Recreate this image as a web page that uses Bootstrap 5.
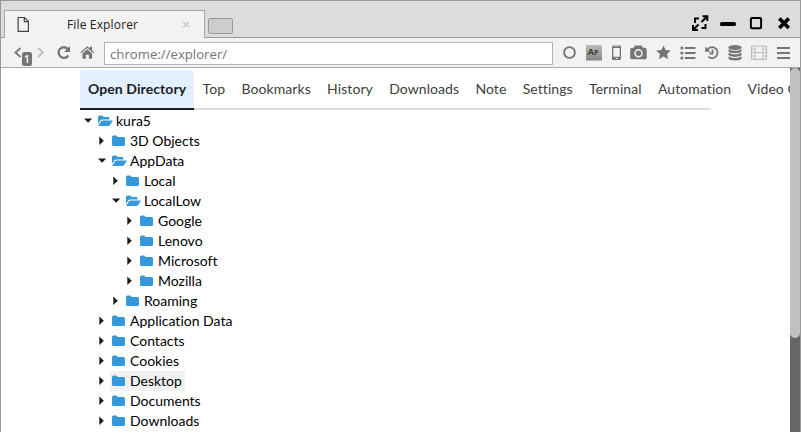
<!DOCTYPE html>
<html lang="en">
<head>
<meta charset="utf-8">
<title>File Explorer</title>
<link rel="stylesheet" href="https://cdn.jsdelivr.net/npm/bootstrap@5.3.0/dist/css/bootstrap.min.css">
<style>
body{font-family:Lato,"Liberation Sans",sans-serif;font-size:14px;line-height:20px;color:#000;font-variant-ligatures:none}
svg{display:block;flex:none}
.window{height:432px;border:1px solid #999;border-bottom:0;background:#fff}
.titlebar{height:37px;background:#dcdcdc;border-bottom:1px solid #999;padding-left:3px}
.browser-tab{width:201px;height:28px;flex:none;margin-top:9px;background:#f2f2f2;border:1px solid #a9a9a9;border-bottom:0;font-family:"Open Sans",sans-serif;font-size:12px;color:#222}
.tab-label{width:74px;margin-left:38px;white-space:nowrap;line-height:27px;letter-spacing:.15px}
.new-tab{width:25px;height:16px;margin:17px 0 0 3px;background:#cdcdcd;border:1px solid #999;border-radius:2px}
.toolbar{height:30px;background:#f2f2f2;border-bottom:1px solid #aaa}
.address{width:449px;height:23px;padding:0 5px;border:1px solid #b5b5b5;border-radius:0;font-family:"Open Sans",sans-serif;font-size:13.2px;line-height:21px;color:#757575;background:#fff;box-shadow:none}
.tools{color:#757575;margin-left:5px}
.page{height:364px;padding:2px 0 0 79px}
.menu-bar{width:631px;height:40px;border-bottom:2px solid #ddd}
.menu-bar .nav-link{height:40px;padding:9px 8px;color:#404040;white-space:nowrap;font-size:14px;line-height:20px;letter-spacing:.08px;margin-right:.25px}
.menu-bar .nav-link.active{width:114px;flex:none;background:#e2f0ff;border-bottom:2px solid #1b1c1d;border-radius:4px 4px 0 0;color:#1b1c1d;font-weight:700;margin-right:.6px}
.tree{padding:1px 0 0 3px}
.tree ul{padding-left:14px}
.tree-row{height:20px}
.entry{height:20px;padding:0 3px 0 2px}
.entry.hovered{background:#f1f1f1}
.scroll-track{width:10px;background:#666}
.scroll-thumb{height:270px;background:#c1c1c1;border-radius:5px}
</style>
<script src="https://cdn.jsdelivr.net/npm/bootstrap@5.3.0/dist/js/bootstrap.bundle.min.js"></script>
</head>
<body class="overflow-hidden">
<svg width="0" height="0" class="position-absolute">
  <symbol id="closed" viewBox="0 0 14 14"><path d="M0 3Q0 1.5 1.5 1.5H4Q5.4 1.5 5.4 3H11.5Q13 3 13 4.5V10.5Q13 12 11.5 12H1.5Q0 12 0 10.5Z" fill="#3498db"/></symbol>
  <symbol id="open" viewBox="0 0 15 14"><path d="M0 9.8V3Q0 1.5 1.5 1.5H4Q5.4 1.5 5.4 3H10Q11.6 3 11.6 4.6V5.5H4.4Q3.1 5.5 2.3 6.6Z" fill="#3498db"/><path d="M.3 11.5 3.2 7.2Q3.8 6.4 4.8 6.4H14.2Q15 6.5 14.5 7.3L12 11Q11.3 12 10.3 12H.8Q0 12 .3 11.5Z" fill="#3498db"/></symbol>
  <symbol id="down" viewBox="0 0 13 20"><path d="M1 7.5H9.2L5.1 11.8Z" fill="#1b1c1d"/></symbol>
  <symbol id="right" viewBox="0 0 13 20"><path d="M2.3 5.5V14L6.8 9.7Z" fill="#1b1c1d"/></symbol>
</svg>
<div class="window d-flex flex-column">
  <header class="titlebar d-flex">
    <div class="browser-tab d-flex">
      <svg width="24" height="27" viewBox="0 0 24 27" fill="none" stroke="#444" stroke-width="1.2"><path d="M13.1 6.5H19.5L23.4 10.4V20.4H13.1ZM19.3 6.7V10.7H23.2"/></svg>
      <span class="tab-label">File Explorer</span>
      <svg class="ms-auto me-1" width="27" height="27" viewBox="0 0 27 27" fill="none" stroke="#c5c5c5" stroke-width="1.2"><path d="M10 10.5 16 16.5M16 10.5 10 16.5"/></svg>
    </div>
    <div class="new-tab"></div>
    <div class="d-flex ms-auto">
      <svg width="28" height="36" viewBox="686 1 28 36" fill="none" stroke="#000" stroke-width="2"><path d="M699 18.5H695V23M701.5 28H705.5V24M701.5 22 706.5 17M698.5 24.5 693.5 29.5"/><path d="M702.5 16.2H707.3V21M693 25V30H698"/></svg>
      <svg width="28" height="36" viewBox="714 1 28 36"><rect x="720" y="22" width="16" height="4" rx="1.6"/></svg>
      <svg width="28" height="36" viewBox="742 1 28 36"><rect x="750.9" y="18" width="10.2" height="10.2" rx="1" fill="none" stroke="#000" stroke-width="2"/></svg>
      <svg width="30" height="36" viewBox="770 1 30 36"><path d="M779.3 18.5 788.8 28M788.8 18.5 779.3 28" stroke="#000" stroke-width="3.8"/></svg>
    </div>
  </header>
  <div class="toolbar d-flex align-items-start">
    <svg width="36" height="29" viewBox="1 38 36 29"><path d="M20.5 48 15.5 52.5 20.5 57" fill="none" stroke="#777" stroke-width="1.8"/><rect x="22" y="52" width="10" height="14" rx="2.5" fill="#757575"/><text x="24" y="63.2" font-family="Open Sans" font-size="10" font-weight="600" fill="#fff">1</text></svg>
    <svg width="15" height="29" viewBox="37 38 15 29"><path d="M38 48 43 52.5 38 57" fill="none" stroke="#bdbdbd" stroke-width="1.8"/></svg>
    <svg width="24" height="29" viewBox="52 38 24 29"><path d="M68 49.2A5.3 5.3 0 1 0 68.3 55.5" fill="none" stroke="#757575" stroke-width="2.3"/><path d="M70 46V52H64Z" fill="#757575"/></svg>
    <svg width="28" height="29" viewBox="76 38 28 29" fill="#757575"><path d="M80.5 52.3 87.3 46.3 90 48.6V46.8H92.1V50.4L94.2 52.3 93.5 53.2 87.3 47.9 81.2 53.2ZM82.5 53.5 87.3 49.3 92.1 53.5V58.7H88.9V54.8H85.8V58.7H82.5Z"/></svg>
    <input class="form-control address mt-1 flex-shrink-0" aria-label="Address" value="chrome://explorer/">
    <div class="tools d-flex">
      <svg width="24" height="29" viewBox="558 38 24 29"><circle cx="569.5" cy="52.5" r="5.4" fill="none" stroke="currentColor" stroke-width="1.9"/></svg>
      <svg width="24" height="29" viewBox="582 38 24 29"><defs><linearGradient id="ap" x2="0" y2="1"><stop stop-color="#bdbdb8"/><stop offset="1" stop-color="#858680"/></linearGradient></defs><rect x="586" y="45" width="16" height="15.5" rx=".6" fill="url(#ap)"/><text x="587.7" y="55.4" font-family="Open Sans" font-size="9" font-weight="700" fill="#383838">A<tspan font-size="7">P</tspan></text></svg>
      <svg width="22" height="29" viewBox="606 38 22 29"><path fill-rule="evenodd" fill="currentColor" d="M613.4 45.5H619.6Q621 45.5 621 47V58.4Q621 60 619.6 60H613.4Q612 60 612 58.4V47Q612 45.5 613.4 45.5ZM613.3 48V56.7H619.7V48ZM614.8 46.4V47H618.2V46.4ZM615.6 57.7V59H617.3V57.7Z"/></svg>
      <svg width="24" height="29" viewBox="628 38 24 29"><path fill="currentColor" d="M632 47.7H633.8L634.8 45.5H641.8L642.8 47.7H644.8Q646.7 47.7 646.7 49.7V57.4Q646.7 59.3 644.8 59.3H632Q630.2 59.3 630.2 57.4V49.7Q630.2 47.7 632 47.7Z"/><circle cx="638.5" cy="53.2" r="3.5" fill="none" stroke="#f2f2f2" stroke-width="1.5"/></svg>
      <svg width="24" height="29" viewBox="652 38 24 29"><path fill="currentColor" d="M663.5 45.5 665.6 50.1 670.8 50.6 667 54 668.1 59.2 663.5 56.6 658.9 59.2 660 54 656.2 50.6 661.4 50.1Z"/></svg>
      <svg width="24" height="29" viewBox="676 38 24 29" stroke="currentColor" stroke-width="2"><path d="M685 48H695.5M685 53H695.5M685 58H695.5"/><g fill="currentColor" stroke="none"><circle cx="681.9" cy="48" r="1.6"/><circle cx="681.9" cy="53" r="1.6"/><circle cx="681.9" cy="58" r="1.6"/></g></svg>
      <svg width="24" height="29" viewBox="700 38 24 29"><path d="M707.2 50A5.5 5.5 0 1 1 708.3 56.7M712.5 49.5V53.5H709.5" fill="none" stroke="currentColor" stroke-width="1.8"/><path d="M705.2 46.6V51.7H710.4Z" fill="currentColor"/></svg>
      <svg width="24" height="29" viewBox="724 38 24 29" fill="currentColor"><ellipse cx="735" cy="47.5" rx="6.6" ry="2.4"/><path id="disc" d="M728.4 49.2Q735 52.5 741.6 49.2V51Q741 53.2 735 53.3Q729 53.2 728.4 51Z"/><use href="#disc" y="3.6"/><use href="#disc" y="7.2"/></svg>
      <svg width="24" height="29" viewBox="748 38 24 29" fill="none" stroke="#bdbdbd"><rect x="751.5" y="46" width="15" height="13.3" rx="1" stroke-width="1.2"/><path d="M755 46V59M763 46V59M755 52.6H763M751.5 49.3H755M751.5 52.6H755M751.5 56H755M763 49.3H766.5M763 52.6H766.5M763 56H766.5"/></svg>
      <svg width="24" height="29" viewBox="772 38 24 29"><path d="M777 48H790M777 53H790M777 58H790" stroke="currentColor" stroke-width="2"/></svg>
    </div>
  </div>
  <div class="d-flex flex-grow-1 overflow-hidden">
    <main class="page flex-grow-1 overflow-hidden">
      <nav class="menu-bar nav flex-nowrap">
        <a class="nav-link active">Open Directory</a><a class="nav-link">Top</a><a class="nav-link">Bookmarks</a><a class="nav-link">History</a><a class="nav-link">Downloads</a><a class="nav-link">Note</a><a class="nav-link">Settings</a><a class="nav-link">Terminal</a><a class="nav-link">Automation</a><a class="nav-link">Video Converter</a>
      </nav>
      <div class="tree" id="tree"></div>
    </main>
    <div class="scroll-track flex-shrink-0"><div class="scroll-thumb"></div></div>
  </div>
</div>
<script>
const files = [['kura5', [
  ['3D Objects'],
  ['AppData', [['Local'], ['LocalLow', [['Google'], ['Lenovo'], ['Microsoft'], ['Mozilla']]], ['Roaming']]],
  ['Application Data'], ['Contacts'], ['Cookies'], ['Desktop'], ['Documents'], ['Downloads']
]]];
const render = (items, nested) => `<ul class="list-unstyled mb-0 ${nested ? '' : 'ps-0'}">` + items.map(([name, kids]) =>
  `<li><div class="tree-row d-flex"><svg width="13" height="20"><use href="#${kids ? 'down' : 'right'}" width="13" height="20"/></svg>` +
  `<div class="entry d-flex align-items-center ${name === 'Desktop' ? 'hovered' : ''}">` +
  `<svg width="18" height="14"><use href="#${kids ? 'open' : 'closed'}" width="${kids ? 15 : 14}" height="14"/></svg><span>${name}</span></div></div>` +
  (kids ? render(kids, true) : '') + '</li>').join('') + '</ul>';
document.getElementById('tree').innerHTML = render(files, false);
</script>
</body>
</html>
